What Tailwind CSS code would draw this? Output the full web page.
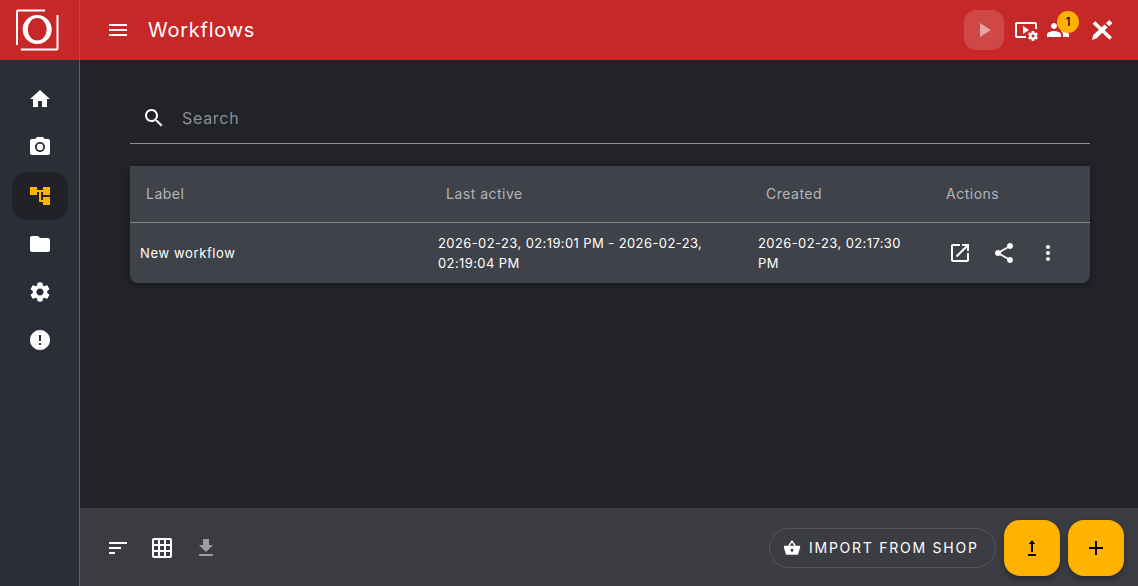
<!doctype html>
<html>
<head>
<meta charset="utf-8">
<script src="https://cdn.jsdelivr.net/npm/@tailwindcss/browser@4"></script>
</head>
<body class="m-0 overflow-hidden bg-[#212328] font-['Inter','Noto_Sans',sans-serif] text-white">
<div class="flex h-[586px] w-[1138px] flex-col">
  <header class="flex h-[60px] shrink-0 items-center bg-[#c62828]">
    <div class="flex h-[60px] w-[80px] shrink-0 items-center justify-center border-r border-[#8d5a5c]">
      <svg class="h-[60px] w-[79px]" viewBox="0 0 79 60" fill="none">
        <path d="M17 45V11.5a1 1 0 0 1 1-1H45" stroke="#fff" stroke-width="2"/>
        <path d="M21 49.5H56.5a1 1 0 0 0 1-1V15" stroke="#fff" stroke-width="2"/>
        <path fill="#fff" fill-rule="evenodd" d="M22.7 29.5a14.5 14.5 0 1 0 29 0a14.5 14.5 0 1 0 -29 0zM27.7 29.3a9.5 11.2 0 1 1 19 0a9.5 11.2 0 1 1 -19 0z"/>
      </svg>
    </div>
    <button class="ml-[26px] flex h-6 w-6 items-center justify-center">
      <svg class="h-6 w-6 fill-white" viewBox="0 0 24 24"><path d="M3 18h18v-2H3v2zm0-5h18v-2H3v2zm0-7v2h18V6H3z"/></svg>
    </button>
    <h1 class="ml-[18px] text-[20px] font-normal tracking-[0.75px]">Workflows</h1>
    <div class="ml-auto flex items-center pr-[24px]">
      <div class="flex h-10 w-10 items-center justify-center rounded-[12px] bg-white/15">
        <svg class="h-6 w-6 fill-white/50" viewBox="0 0 24 24"><path d="M8 5v14l11-7z"/></svg>
      </div>
      <svg class="ml-[10px] h-6 w-6 fill-white" viewBox="0 0 24 24"><path d="M3 6h18v5h2V6c0-1.1-.9-2-2-2H3c-1.1 0-2 .9-2 2v12c0 1.1.9 2 2 2h9v-2H3V6z"/><path d="M15 12l-6-4v8l6-4z"/><path d="M22.71 18.43c.03-.29.04-.58.01-.86l1.07-.85c.1-.08.12-.21.06-.32l-1.03-1.79c-.06-.11-.19-.15-.31-.11l-1.28.5c-.23-.17-.48-.31-.75-.42l-.2-1.36c-.02-.13-.12-.22-.25-.22h-2.07c-.12 0-.23.09-.25.21l-.2 1.36c-.26.11-.51.26-.74.42l-1.28-.5c-.12-.05-.25 0-.31.11l-1.03 1.79c-.06.11-.04.24.06.32l1.07.85c-.03.29-.04.58-.01.86l-1.07.85c-.1.08-.12.21-.06.32l1.03 1.79c.06.11.19.15.31.11l1.27-.5c.23.17.48.31.75.42l.2 1.36c.02.12.12.21.25.21h2.07c.12 0 .23-.09.25-.21l.2-1.36c.26-.11.51-.26.74-.42l1.28.5c.12.05.25 0 .31-.11l1.03-1.79c.06-.11.04-.24-.06-.32l-1.06-.85zM19 19.5c-.83 0-1.5-.67-1.5-1.5s.67-1.5 1.5-1.5 1.5.67 1.5 1.5-.67 1.5-1.5 1.5z"/></svg>
      <div class="relative ml-[8px] h-6 w-6">
        <svg class="h-6 w-6 fill-white" viewBox="0 0 24 24"><path d="M16 11c1.66 0 2.99-1.34 2.99-3S17.66 5 16 5c-1.66 0-3 1.34-3 3s1.34 3 3 3zm-8 0c1.66 0 2.99-1.34 2.99-3S9.66 5 8 5C6.34 5 5 6.34 5 8s1.34 3 3 3zm0 2c-2.33 0-7 1.17-7 3.5V19h14v-2.5c0-2.33-4.67-3.5-7-3.5zm8 0c-.29 0-.62.02-.97.05 1.16.84 1.97 1.97 1.97 3.45V19h6v-2.5c0-2.33-4.67-3.5-7-3.5z"/></svg>
        <span class="absolute left-[11px] top-[-7px] flex h-[22px] w-[22px] items-center justify-center rounded-full bg-[#ffb300] text-[12px] font-medium text-black">1</span>
      </div>
      <svg class="ml-[20px] h-6 w-6 fill-white" viewBox="0 0 24 24"><path d="M5.2 3.2L22 19.2L19.6 21.8L2.6 5.8z"/><path d="M2 22L3.2 17L14.6 6.4L17.6 9.6L6.4 20.6z"/><path d="M16 5.1L19.4 2L22.4 5.2L19 8.3z"/></svg>
    </div>
  </header>
  <div class="flex min-h-0 flex-1">
    <nav class="flex w-[80px] shrink-0 flex-col items-center border-r border-[#5a5d64] bg-[#2a2e37] pt-[15px]">
      <div class="flex h-12 w-14 items-center justify-center"><svg class="h-6 w-6 fill-white" viewBox="0 0 24 24"><path d="M10 20v-6h4v6h5v-8h3L12 3 2 12h3v8z"/></svg></div>
      <div class="flex h-12 w-14 items-center justify-center"><svg class="h-6 w-6 fill-white" viewBox="0 0 24 24"><circle cx="12" cy="12" r="3.2"/><path d="M9 2L7.17 4H4c-1.1 0-2 .9-2 2v12c0 1.1.9 2 2 2h16c1.1 0 2-.9 2-2V6c0-1.1-.9-2-2-2h-3.17L15 2H9zm3 15c-2.76 0-5-2.24-5-5s2.24-5 5-5 5 2.24 5 5-2.24 5-5 5z"/></svg></div>
      <div class="mt-px flex h-12 w-14 items-center justify-center rounded-[16px] bg-[#212226]"><svg class="h-6 w-6 fill-[#ffb300]" viewBox="0 0 24 24"><path d="M22 11V3h-7v3H9V3H2v8h7V8h2v10h4v3h7v-8h-7v3h-2V8h2v3z"/></svg></div>
      <div class="flex h-12 w-14 items-center justify-center"><svg class="h-6 w-6 fill-white" viewBox="0 0 24 24"><path d="M10 4H4c-1.1 0-1.99.9-1.99 2L2 18c0 1.1.9 2 2 2h16c1.1 0 2-.9 2-2V8c0-1.1-.9-2-2-2h-8l-2-2z"/></svg></div>
      <div class="flex h-12 w-14 items-center justify-center"><svg class="h-6 w-6 fill-white" viewBox="0 0 24 24"><path d="M19.14 12.94c.04-.3.06-.61.06-.94 0-.32-.02-.64-.07-.94l2.03-1.58c.18-.14.23-.41.12-.61l-1.92-3.32c-.12-.22-.37-.29-.59-.22l-2.39.96c-.5-.38-1.03-.7-1.62-.94l-.36-2.54c-.04-.24-.24-.41-.48-.41h-3.84c-.24 0-.43.17-.47.41l-.36 2.54c-.59.24-1.13.57-1.62.94l-2.39-.96c-.22-.08-.47 0-.59.22L2.74 8.87c-.12.21-.08.47.12.61l2.03 1.58c-.05.3-.09.63-.09.94s.02.64.07.94l-2.03 1.58c-.18.14-.23.41-.12.61l1.92 3.32c.12.22.37.29.59.22l2.39-.96c.5.38 1.03.7 1.62.94l.36 2.54c.05.24.24.41.48.41h3.84c.24 0 .44-.17.47-.41l.36-2.54c.59-.24 1.13-.56 1.62-.94l2.39.96c.22.08.47 0 .59-.22l1.92-3.32c.12-.22.07-.47-.12-.61l-2.01-1.58zM12 15.6c-1.98 0-3.6-1.62-3.6-3.6s1.62-3.6 3.6-3.6 3.6 1.62 3.6 3.6-1.62 3.6-3.6 3.6z"/></svg></div>
      <div class="flex h-12 w-14 items-center justify-center"><svg class="h-6 w-6 fill-white" viewBox="0 0 24 24"><path d="M12 2C6.48 2 2 6.48 2 12s4.48 10 10 10 10-4.48 10-10S17.52 2 12 2zm1 15h-2v-2h2v2zm0-4h-2V7h2v6z"/></svg></div>
    </nav>
    <div class="flex min-w-0 flex-1 flex-col">
      <main class="min-h-0 flex-1 pl-[50px] pr-[48px] pt-[30px]">
        <div class="flex h-[54px] items-center border-b border-[#8a8b8e] pl-[12px] pt-[3px]">
          <svg class="h-6 w-6 fill-white" viewBox="0 0 24 24"><path d="M15.5 14h-.79l-.28-.27C15.41 12.59 16 11.11 16 9.5 16 5.91 13.09 3 9.5 3S3 5.91 3 9.5 5.91 16 9.5 16c1.61 0 3.09-.59 4.23-1.57l.27.28v.79l5 4.99L20.49 19l-4.99-5zm-6 0C7.01 14 5 11.99 5 9.5S7.01 5 9.5 5 14 7.01 14 9.5 11.99 14 9.5 14z"/></svg>
          <span class="ml-[16px] text-[16px] tracking-[0.7px] text-[#8e8f92]">Search</span>
        </div>
        <div class="mt-[22px] overflow-hidden rounded-b-[8px] bg-[#3f4248] shadow-[0_2px_6px_rgba(0,0,0,0.35)]">
          <div class="grid h-[57px] grid-cols-[300px_320px_180px_1fr] items-center border-b border-[#87888b] pb-[2px] pl-[16px] text-[14px] tracking-[0.5px] text-[#b4b5b8]">
            <span>Label</span><span>Last active</span><span>Created</span><span>Actions</span>
          </div>
          <div class="grid h-[60px] grid-cols-[298px_320px_180px_1fr] items-center pl-[10px] text-[13px] leading-[20px] tracking-[0.4px]">
            <span class="tracking-[0.63px]">New workflow</span>
            <span class="pr-[40px]">2026-02-23, 02:19:01 PM - 2026-02-23, 02:19:04 PM</span>
            <span class="pr-[20px]">2026-02-23, 02:17:30 PM</span>
            <div class="flex items-center gap-[20px] pl-[10px]">
              <svg class="h-6 w-6 fill-white" viewBox="0 0 24 24"><path d="M19 19H5V5h7V3H5c-1.11 0-2 .9-2 2v14c0 1.1.89 2 2 2h14c1.1 0 2-.9 2-2v-7h-2v7zM14 3v2h3.59l-9.83 9.83 1.41 1.41L19 6.41V10h2V3h-7z"/></svg>
              <svg class="h-6 w-6 fill-white" viewBox="0 0 24 24"><path d="M18 16.08c-.76 0-1.44.3-1.96.77L8.91 12.7c.05-.23.09-.46.09-.7s-.04-.47-.09-.7l7.05-4.11c.54.5 1.25.81 2.04.81 1.66 0 3-1.34 3-3s-1.34-3-3-3-3 1.34-3 3c0 .24.04.47.09.7L8.04 9.81C7.5 9.31 6.79 9 6 9c-1.66 0-3 1.34-3 3s1.34 3 3 3c.79 0 1.5-.31 2.04-.81l7.12 4.16c-.05.21-.08.43-.08.65 0 1.61 1.31 2.92 2.92 2.92 1.61 0 2.92-1.31 2.92-2.92s-1.31-2.92-2.92-2.92z"/></svg>
              <svg class="h-6 w-6 fill-white" viewBox="0 0 24 24"><path d="M12 8c1.1 0 2-.9 2-2s-.9-2-2-2-2 .9-2 2 .9 2 2 2zm0 2c-1.1 0-2 .9-2 2s.9 2 2 2 2-.9 2-2-.9-2-2-2zm0 6c-1.1 0-2 .9-2 2s.9 2 2 2 2-.9 2-2-.9-2-2-2z"/></svg>
            </div>
          </div>
        </div>
      </main>
      <footer class="flex h-[78px] shrink-0 items-center bg-[#3c3d43] pl-[26px] pr-[14px] pt-[2px]">
        <svg class="h-6 w-6 fill-white" viewBox="0 0 24 24"><path d="M3 18h6v-2H3v2zM3 6v2h18V6H3zm0 7h12v-2H3v2z"/></svg>
        <svg class="ml-[20px] h-6 w-6 fill-white" viewBox="0 0 24 24"><path d="M20 2H4c-1.1 0-2 .9-2 2v16c0 1.1.9 2 2 2h16c1.1 0 2-.9 2-2V4c0-1.1-.9-2-2-2zM8 20H4v-4h4v4zm0-6H4v-4h4v4zm0-6H4V4h4v4zm6 12h-4v-4h4v4zm0-6h-4v-4h4v4zm0-6h-4V4h4v4zm6 12h-4v-4h4v4zm0-6h-4v-4h4v4zm0-6h-4V4h4v4z"/></svg>
        <svg class="ml-[20px] h-6 w-6 fill-[#9d9ea1]" viewBox="0 0 24 24"><path d="M19 9h-4V3H9v6H5l7 7 7-7zM5 18v2h14v-2H5z"/></svg>
        <div class="ml-auto flex h-10 w-[227px] items-center rounded-full border border-[#55565c] pl-[13px] text-[14px] font-normal tracking-[1.75px]">
          <svg class="h-[18px] w-[18px] fill-white" viewBox="0 0 24 24"><path d="M17.21 9l-4.38-6.56c-.19-.28-.51-.42-.83-.42-.32 0-.64.14-.83.43L6.79 9H2c-.55 0-1 .45-1 1 0 .09.01.18.04.27l2.54 9.27c.23.84 1 1.46 1.92 1.46h13c.92 0 1.69-.62 1.93-1.46l2.54-9.27L23 10c0-.55-.45-1-1-1h-4.79zM9 9l3-4.4L15 9H9zm3 8c-1.1 0-2-.9-2-2s.9-2 2-2 2 .9 2 2-.9 2-2 2z"/></svg>
          <span class="ml-[8px] pb-px">IMPORT FROM SHOP</span>
        </div>
        <button class="ml-[8px] flex h-14 w-14 items-center justify-center rounded-[16px] bg-[#ffb300] shadow-[0_3px_6px_rgba(0,0,0,0.35)]">
          <svg class="h-6 w-6 fill-black" viewBox="0 0 24 24"><path d="M12 4L8.8 8H11v8h2V8h2.2zM8 18h8v2H8z"/></svg>
        </button>
        <button class="ml-[8px] flex h-14 w-14 items-center justify-center rounded-[16px] bg-[#ffb300] shadow-[0_3px_6px_rgba(0,0,0,0.35)]">
          <svg class="h-6 w-6 fill-black" viewBox="0 0 24 24"><path d="M19 13h-6v6h-2v-6H5v-2h6V5h2v6h6v2z"/></svg>
        </button>
      </footer>
    </div>
  </div>
</div>
</body>
</html>
